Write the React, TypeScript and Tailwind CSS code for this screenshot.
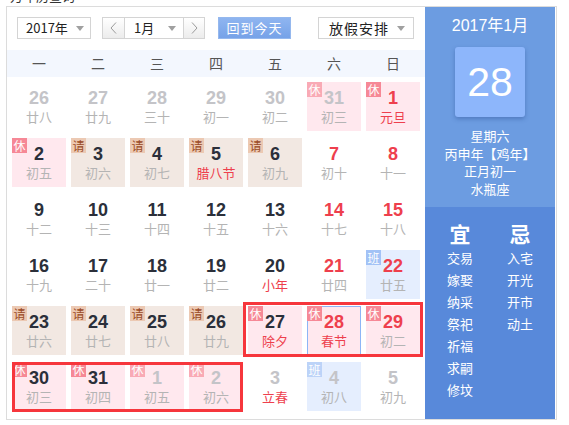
import React from 'react';

type Cell = {
  d: number;
  l: string;
  badge?: '休' | '请' | '班';
  muted?: boolean;
  red?: boolean;
  redL?: boolean;
  today?: boolean;
};

const cells: Cell[] = [
  { d: 26, l: '廿八', muted: true },
  { d: 27, l: '廿九', muted: true },
  { d: 28, l: '三十', muted: true },
  { d: 29, l: '初一', muted: true },
  { d: 30, l: '初二', muted: true },
  { d: 31, l: '初三', muted: true, badge: '休' },
  { d: 1, l: '元旦', red: true, redL: true, badge: '休' },

  { d: 2, l: '初五', badge: '休' },
  { d: 3, l: '初六', badge: '请' },
  { d: 4, l: '初七', badge: '请' },
  { d: 5, l: '腊八节', redL: true, badge: '请' },
  { d: 6, l: '初九', badge: '请' },
  { d: 7, l: '初十', red: true },
  { d: 8, l: '十一', red: true },

  { d: 9, l: '十二' },
  { d: 10, l: '十三' },
  { d: 11, l: '十四' },
  { d: 12, l: '十五' },
  { d: 13, l: '十六' },
  { d: 14, l: '十七', red: true },
  { d: 15, l: '十八', red: true },

  { d: 16, l: '十九' },
  { d: 17, l: '二十' },
  { d: 18, l: '廿一' },
  { d: 19, l: '廿二' },
  { d: 20, l: '小年', redL: true },
  { d: 21, l: '廿四', red: true },
  { d: 22, l: '廿五', red: true, badge: '班' },

  { d: 23, l: '廿六', badge: '请' },
  { d: 24, l: '廿七', badge: '请' },
  { d: 25, l: '廿八', badge: '请' },
  { d: 26, l: '廿九', badge: '请' },
  { d: 27, l: '除夕', redL: true, badge: '休' },
  { d: 28, l: '春节', red: true, redL: true, badge: '休', today: true },
  { d: 29, l: '初二', red: true, badge: '休' },

  { d: 30, l: '初三', badge: '休' },
  { d: 31, l: '初四', badge: '休' },
  { d: 1, l: '初五', muted: true, badge: '休' },
  { d: 2, l: '初六', muted: true, badge: '休' },
  { d: 3, l: '立春', muted: true, redL: true },
  { d: 4, l: '初八', muted: true, badge: '班' },
  { d: 5, l: '初九', muted: true },
];

const weekdays = ['一', '二', '三', '四', '五', '六', '日'];
const yi = ['交易', '嫁娶', '纳采', '祭祀', '祈福', '求嗣', '修坟'];
const ji = ['入宅', '开光', '开市', '动土'];

function Caret() {
  return (
    <svg width="8" height="5" viewBox="0 0 8 5" className="shrink-0">
      <polygon points="0,0 8,0 4,5" fill="#a0a0a0" />
    </svg>
  );
}

function DayCell({ c }: { c: Cell }) {
  let bg = '';
  if (c.badge === '休') bg = 'bg-[#ffe8ee]';
  if (c.badge === '请') bg = 'bg-[#f2e8e2]';
  if (c.badge === '班') bg = 'bg-[#e5eefe]';

  let badgeCls = '';
  if (c.badge === '休') badgeCls = c.muted ? 'bg-[#f9aab5] text-white' : 'bg-[#f68896] text-white';
  if (c.badge === '请') badgeCls = 'bg-[#ecc9b3] text-[#9a4a25]';
  if (c.badge === '班') badgeCls = c.muted ? 'bg-[#bcd3f8] text-white' : 'bg-[#a2c2f6] text-white';

  const numColor = c.muted ? 'text-[#c4c4c8]' : c.red ? 'text-[#ee3f4d]' : 'text-[#2b2f3a]';
  const lunarColor = c.redL ? 'text-[#ee3f4d]' : 'text-[#b4b4b4]';

  return (
    <div
      className={`relative h-[49px] flex flex-col items-center ${c.today ? 'pt-[4px]' : 'pt-[5px]'} ${bg} ${
        c.today ? 'border border-[#8db5f6]' : ''
      }`}
    >
      {c.badge && (
        <span
          className={`absolute ${c.today ? '-left-px -top-px' : 'left-0 top-0'} w-[15px] h-[15px] text-[12px] leading-[15px] text-center ${badgeCls}`}
        >
          {c.badge}
        </span>
      )}
      <span className={`font-['Liberation_Sans',Arial,sans-serif] font-bold text-[18px] leading-[22px] ${numColor}`}>
        {c.d}
      </span>
      <span className={`text-[13px] leading-[16px] ${lunarColor}`}>{c.l}</span>
    </div>
  );
}

export default function App() {
  return (
    <div className="w-[569px] h-[425px] bg-white overflow-hidden font-['Noto_Sans_CJK_SC',sans-serif]">
      <div className="h-[6px] overflow-hidden pl-[10px]">
        <div className="mt-[-11px] text-[13px] leading-[14px] text-[#333]">万年历查询</div>
      </div>
      <div className="ml-[6px] w-[551px] h-[414px] border border-[#dcdcdc] flex">
        {/* left calendar */}
        <div className="w-[418px] flex flex-col">
          <div className="h-[43px] pt-[10px] pl-[10px] flex items-start">
            <div className="w-[74px] h-[22px] border border-[#d4d4d4] flex items-center justify-between pl-[8px] pr-[6px]">
              <span className="text-[13px] leading-[20px] text-[#222]">2017年</span>
              <Caret />
            </div>
            <div className="ml-[11px] flex h-[22px] border border-[#d4d4d4]">
              <div className="w-[22px] h-full flex items-center justify-center bg-gradient-to-b from-[#ffffff] to-[#ececec] border-r border-[#d4d4d4]">
                <svg width="7" height="12" viewBox="0 0 7 12">
                  <polyline points="6,0.5 1,6 6,11.5" fill="none" stroke="#9a9a9a" strokeWidth="1" />
                </svg>
              </div>
              <div className="w-[58px] h-full flex items-center justify-between pl-[9px] pr-[7px]">
                <span className="text-[13px] leading-[20px] text-[#222]">1月</span>
                <Caret />
              </div>
              <div className="w-[21px] h-full flex items-center justify-center bg-gradient-to-b from-[#ffffff] to-[#ececec] border-l border-[#d4d4d4]">
                <svg width="7" height="12" viewBox="0 0 7 12">
                  <polyline points="1,0.5 6,6 1,11.5" fill="none" stroke="#9a9a9a" strokeWidth="1" />
                </svg>
              </div>
            </div>
            <div className="ml-[13px] w-[73px] h-[22px] border border-[#95b8ee] bg-gradient-to-b from-[#8fb5f0] to-[#76a2e8] flex items-center justify-center text-white text-[13px] leading-[20px] tracking-[1px]">
              回到今天
            </div>
            <div className="ml-[27px] w-[96px] h-[22px] border border-[#d4d4d4] flex items-center justify-between pl-[10px] pr-[8px]">
              <span className="text-[14px] leading-[20px] text-[#222] tracking-[1px]">放假安排</span>
              <Caret />
            </div>
          </div>

          <div className="h-[27px] bg-[#f3f7fe] grid grid-cols-7 px-[5px] gap-x-[5px]">
            {weekdays.map((w) => (
              <div key={w} className="flex items-center justify-center text-[14px] text-[#555]">
                {w}
              </div>
            ))}
          </div>

          <div className="relative grid grid-cols-7 gap-x-[5px] gap-y-[7px] px-[5px] pt-[5px]">
            {cells.map((c, i) => (
              <DayCell key={i} c={c} />
            ))}
            <div className="absolute left-[236px] top-[225px] w-[180px] h-[55px] border-[3px] border-[#f6363c] pointer-events-none" />
            <div className="absolute left-[5px] top-[285px] w-[231px] h-[50px] border-[3px] border-[#f6363c] pointer-events-none" />
          </div>
        </div>

        {/* right info panel */}
        <div className="w-[130px] flex flex-col text-white">
          <div className="h-[200px] bg-[#6c9ce1] flex flex-col items-center pt-[9px]">
            <div className="font-['Liberation_Sans','Noto_Sans_CJK_SC',sans-serif] text-[16px] leading-[20px]">2017年1月</div>
            <div className="mt-[11px] w-[70px] h-[70px] rounded-[3px] bg-[#8db6fb] shadow-[0_2px_4px_rgba(30,60,130,0.35)] flex items-center justify-center">
              <span className="font-['Liberation_Sans',Arial,sans-serif] text-[41px] leading-none">28</span>
            </div>
            <div className="mt-[10px] flex flex-col items-center text-[13px] leading-[17.5px]">
              <span>星期六</span>
              <span>丙申年【鸡年】</span>
              <span>正月初一</span>
              <span>水瓶座</span>
            </div>
          </div>
          <div className="flex-1 bg-[#5889da] grid grid-cols-2 px-[5px] pt-[14px]">
            <div className="flex flex-col items-center">
              <span className="text-[21px] leading-[24px] font-bold">宜</span>
              <div className="mt-[2px] flex flex-col items-center text-[13px] leading-[22px]">
                {yi.map((t) => (
                  <span key={t}>{t}</span>
                ))}
              </div>
            </div>
            <div className="flex flex-col items-center">
              <span className="text-[21px] leading-[24px] font-bold">忌</span>
              <div className="mt-[2px] flex flex-col items-center text-[13px] leading-[22px]">
                {ji.map((t) => (
                  <span key={t}>{t}</span>
                ))}
              </div>
            </div>
          </div>
        </div>
      </div>
    </div>
  );
}
